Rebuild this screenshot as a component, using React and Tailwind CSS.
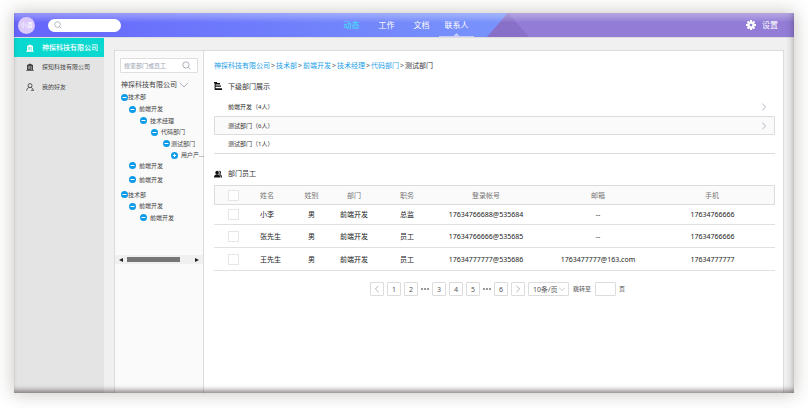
import React from "react";

const TABS = ["动态", "工作", "文档", "联系人"];

const TREE = [
  { label: "技术部", row: "h-3 pl-[6px]", gap: "" },
  { label: "前端开发", row: "h-3 pl-[14px]", gap: "ml-[3px]" },
  { label: "技术经理", row: "h-[11px] pl-[25px]", gap: "ml-[3px]" },
  { label: "代码部门", row: "h-3 pl-[36px]", gap: "ml-[3px]" },
  { label: "测试部门", row: "h-[11px] pl-[48px]", gap: "ml-[1px]" },
  { label: "用户产...", row: "h-3 pl-[56px]", gap: "ml-[3px]", closed: true },
  { label: "前端开发", row: "h-[9px] pl-[14px]", gap: "ml-[3px]" },
  { label: "前端开发", row: "mt-1 h-[11px] pl-[14px]", gap: "ml-[3px]" },
  { label: "技术部", row: "mt-1 h-[11px] pl-[6px]", gap: "" },
  { label: "前端开发", row: "h-3 pl-[14px]", gap: "ml-[3px]" },
  { label: "前端开发", row: "h-[11px] pl-[25px]", gap: "ml-[3px]" },
];

const CRUMBS = ["神探科技有限公司", "技术部", "前端开发", "技术经理", "代码部门"];

const DEPARTMENTS = [
  { name: "前端开发（4人）", arrow: true },
  { name: "测试部门（6人）", arrow: true, active: true },
  { name: "测试部门（1人）" },
];

const STAFF = [
  { h: "h-5", name: "小李", sex: "男", dept: "前端开发", job: "总监", login: "17634766688@535684", mail: "--", phone: "17634766666" },
  { h: "h-[23px]", name: "张先生", sex: "男", dept: "前端开发", job: "员工", login: "17634766666@535685", mail: "--", phone: "17634766666" },
  { h: "h-[23px]", name: "王先生", sex: "男", dept: "前端开发", job: "员工", login: "17634777777@535686", mail: "1763477777@163.com", phone: "17634777777" },
];

function SearchIcon({ className }) {
  return (
    <svg viewBox="0 0 10 10" className={className} fill="none" stroke="currentColor" strokeWidth="0.9" aria-hidden="true">
      <circle cx="4.4" cy="4.4" r="3.5" />
      <path d="M7 7l2.3 2.3" />
    </svg>
  );
}

function Chevron({ className, d }) {
  return (
    <svg viewBox="0 0 10 10" className={className} fill="none" stroke="currentColor" strokeWidth="1" aria-hidden="true">
      <path d={d} />
    </svg>
  );
}

const RIGHT = "M3 1l4 4-4 4";
const LEFT = "M7 1L3 5l4 4";
const DOWN = "M0 2.500l5 5 5-5";

function BuildingIcon() {
  return (
    <svg viewBox="0 0 8 8" className="size-2" fill="currentColor" aria-hidden="true">
      <path fillRule="evenodd" d="M1 2L4 .6l3 1.400v5h.8v.8H.2V7H1zM2.200 3v.5h2.200V3zm0 1.300v.5h2.200v-.5zm0 1.300v.5h2.200v-.5zM5.400 3v4h.4V3z" />
    </svg>
  );
}

function PersonIcon() {
  return (
    <svg viewBox="0 0 8 8" className="size-2" fill="none" stroke="currentColor" strokeWidth="0.9" aria-hidden="true">
      <circle cx="4" cy="2.6" r="2" />
      <path d="M.6 7.600C.8 5.700 2 4.700 3.200 4.500M4.800 4.500C6 4.700 7.200 5.600 7.400 7.600M5 7.300h2.400" />
    </svg>
  );
}

function NodeIcon({ closed }) {
  return (
    <svg viewBox="0 0 7 7" className="size-[7px] shrink-0" aria-hidden="true">
      <circle cx="3.5" cy="3.5" r="3.5" fill="#0c9be8" />
      <path d={closed ? "M1.900 3.500h3.200M3.500 1.900v3.200" : "M1.500 3.500h4"} stroke="#fff" strokeWidth="1" />
    </svg>
  );
}

function Header() {
  return (
    <header className="relative grid h-6 shrink-0 grid-cols-[1fr_auto_1fr] items-center bg-gradient-to-r from-[#6664fb] to-[#7b98fb] to-70% text-[8px] leading-none text-white">
      <svg className="absolute inset-0 h-full w-full" viewBox="0 0 780 24" preserveAspectRatio="none" aria-hidden="true">
        <path d="M494 0H780V24H473z" fill="#927cd6" />
        <path d="M494 0L515 24H473z" fill="#886fc8" />
      </svg>
      <div className="absolute inset-0 bg-gradient-to-b from-white/35 to-transparent to-40%" />
      <div className="relative flex items-center gap-[13px] pl-1">
        <div className="flex size-[17px] items-center justify-center rounded-full bg-[#dac9fa] text-[6px] text-white">小酒</div>
        <label className="flex h-[13px] w-[73px] items-center rounded-full bg-white px-[6px] text-gray-400">
          <SearchIcon className="size-2 shrink-0" />
          <input aria-label="搜索" className="w-full min-w-0 bg-transparent pl-1 text-[7px] text-gray-700 outline-none" />
        </label>
      </div>
      <nav className="relative flex h-full">
        {TABS.map((t, i) => (
          <a key={t} href="#" className={`relative flex h-full w-[35px] items-center justify-center ${i === 0 ? "text-[#3ee6fb]" : ""}`}>
            {t}
            {i === 3 && (
              <svg className="absolute bottom-0 left-0 h-1 w-full" viewBox="0 0 35 4" fill="#c3ccfd" aria-hidden="true">
                <path d="M0 3h14.500L17.500 0l3 3H35v1H0z" />
              </svg>
            )}
          </a>
        ))}
      </nav>
      <button className="relative flex items-center gap-[6px] justify-self-end pr-4">
        <svg viewBox="0 0 20 20" className="size-[10px]" aria-hidden="true">
          <g fill="none" stroke="#fff">
            <circle cx="10" cy="10" r="5" strokeWidth="4.500" />
            <path d="M10 0v4M10 16v4M0 10h4M16 10h4M3 3l3 3M14 14l3 3M17 3l-3 3M6 14l-3 3" strokeWidth="4" />
          </g>
        </svg>
        设置
      </button>
    </header>
  );
}

function Sidebar() {
  const item = "flex items-center gap-2 pl-3";
  return (
    <nav className="flex w-[90px] shrink-0 flex-col bg-[#e4e4e4] text-[6px] leading-none text-[#444]">
      <a href="#" className={`${item} h-[19px] bg-[#09d8d0] text-[7px] font-medium text-white`}><BuildingIcon />神探科技有限公司</a>
      <a href="#" className={`${item} h-5`}><BuildingIcon />探知科技有限公司</a>
      <a href="#" className={`${item} h-5`}><PersonIcon />我的好友</a>
    </nav>
  );
}

function TreePanel() {
  return (
    <aside className="w-[89px] shrink-0 border-r border-[#dcdcdc] bg-[#fafafa] pt-[7px] text-[#444]">
      <label className="mx-[5px] flex h-[15px] items-center rounded-[1px] border border-[#dedede] bg-white pr-[6px] pl-[3px] text-gray-400">
        <input aria-label="搜索部门或员工" placeholder="搜索部门或员工" className="w-full min-w-0 bg-transparent text-[6px] leading-none outline-none placeholder:text-gray-400" />
        <SearchIcon className="size-[9px] shrink-0" />
      </label>
      <button className="mt-[5px] flex h-[13px] items-center gap-[3px] pl-[6px] text-[7px] leading-none">
        神探科技有限公司
        <Chevron d={DOWN} className="size-2 text-gray-400" />
      </button>
      <ul className="text-[6px] leading-none">
        {TREE.map((n, i) => (
          <li key={i} className={`flex items-center ${n.row}`}>
            <NodeIcon closed={n.closed} />
            <span className={`whitespace-nowrap ${n.gap}`}>{n.label}</span>
          </li>
        ))}
      </ul>
      <div className="mt-8 flex h-[9px] items-center gap-1 bg-[#f0f0f0] px-1">
        <svg viewBox="0 0 4 4" className="size-1"><path d="M4 0v4L0 2z" fill="#222" /></svg>
        <div className="h-[5px] w-[53px] bg-[#777]" />
        <svg viewBox="0 0 4 4" className="ml-auto size-1"><path d="M0 0v4l4-2z" fill="#222" /></svg>
      </div>
    </aside>
  );
}

function Check({ label }) {
  return <input type="checkbox" aria-label={label} className="mx-auto block size-[11px] appearance-none border border-[#e6e6e6] bg-white checked:bg-[#0c9be8]" />;
}

function StaffTable() {
  const th = "border-y border-[#dcdcdc] bg-[#fafafa] p-0 font-normal";
  const td = "border-b border-[#e0e0e0] p-0";
  return (
    <table className="mt-[5px] w-full table-fixed border-separate border-spacing-0 text-center text-[7px] leading-none text-[#222]">
      <colgroup>
        <col className="w-[38px]" />
        <col className="w-[39px]" />
        <col className="w-[41px]" />
        <col className="w-[44px]" />
        <col className="w-[62px]" />
        <col className="w-[96px]" />
        <col className="w-[128px]" />
        <col className="w-[113px]" />
      </colgroup>
      <thead>
        <tr className="h-5 text-[#777]">
          <th className={`${th} rounded-l-[1px] border-l`}><Check label="全选" /></th>
          <th className={`${th} pl-2! text-left`}>姓名</th>
          <th className={th}>姓别</th>
          <th className={th}>部门</th>
          <th className={th}>职务</th>
          <th className={th}>登录帐号</th>
          <th className={th}>邮箱</th>
          <th className={`${th} rounded-r-[1px] border-r pr-3!`}>手机</th>
        </tr>
      </thead>
      <tbody>
        {STAFF.map((s) => (
          <tr key={s.login} className={s.h}>
            <td className={td}><Check label={s.name} /></td>
            <td className={`${td} pl-2! text-left`}>{s.name}</td>
            <td className={td}>{s.sex}</td>
            <td className={td}>{s.dept}</td>
            <td className={td}>{s.job}</td>
            <td className={td}>{s.login}</td>
            <td className={td}>{s.mail}</td>
            <td className={`${td} pr-3!`}>{s.phone}</td>
          </tr>
        ))}
      </tbody>
    </table>
  );
}

function Pagination() {
  const box = "flex size-[14px] items-center justify-center rounded-[1px] border border-[#dcdcdc]";
  const dots = <span className="flex w-2 justify-between">{[0, 1, 2].map((i) => <i key={i} className="size-[2px] rounded-full bg-[#777]" />)}</span>;
  return (
    <div className="mt-[11px] flex items-center justify-center gap-[3px] pl-[6px] text-[7px] leading-none text-[#555]">
      <button aria-label="上一页" className={`${box} text-gray-400`}><Chevron d={LEFT} className="size-2" /></button>
      <button className={box}>1</button>
      <button className={box}>2</button>
      {dots}
      <button className={box}>3</button>
      <button className={box}>4</button>
      <button className={box}>5</button>
      {dots}
      <button className={box}>6</button>
      <button aria-label="下一页" className={`${box} text-gray-400`}><Chevron d={RIGHT} className="size-2" /></button>
      <div className="relative">
        <select aria-label="每页条数" className="block h-[14px] w-[41px] appearance-none rounded-[1px] border border-[#dcdcdc] bg-white pl-1 text-[7px] leading-none">
          <option>10条/页</option>
        </select>
        <Chevron d={DOWN} className="pointer-events-none absolute top-1 right-1 size-[6px] text-gray-400" />
      </div>
      <label htmlFor="jump" className="px-px text-[6px]">跳转至</label>
      <input id="jump" className="h-[14px] w-[21px] rounded-[1px] border border-[#dcdcdc] text-center" />
      <span className="text-[6px]">页</span>
    </div>
  );
}

function Main() {
  return (
    <main className="min-w-0 flex-1 bg-white pr-2 pl-[10px] text-[#333]">
      <nav aria-label="面包屑" className="mt-2 flex h-3 items-center gap-px text-[7px] leading-none">
        {CRUMBS.map((c) => (
          <React.Fragment key={c}>
            <a href="#" className="text-[#1ba1e8]">{c}</a>
            <span className="text-[#666]">&gt;</span>
          </React.Fragment>
        ))}
        <span>测试部门</span>
      </nav>
      <h2 className="mt-[9px] flex h-3 items-center gap-[6px] text-[7px] leading-none">
        <svg viewBox="0 0 8 8" className="size-2" fill="#111" aria-hidden="true">
          <path d="M0 0h3v1H6v1.400H1.600v1H7v1.400H1.600v1.400H8V8H.6V1.200H0z" />
        </svg>
        下级部门展示
      </h2>
      <ul className="mt-[6px] border-b border-[#dcdcdc] text-[6px] leading-none">
        {DEPARTMENTS.map((d) => (
          <li key={d.name} className={`flex items-center justify-between pl-[14px] ${d.active ? "h-[19px] rounded-[1px] border border-[#dcdcdc] bg-[#fafafa] pr-[6px] pl-[13px]!" : "h-[18px] pr-[7px]"}`}>
            {d.name}
            {d.arrow && <Chevron d={RIGHT} className="size-2 text-gray-400" />}
          </li>
        ))}
      </ul>
      <h2 className="mt-[13px] flex h-[13px] items-center gap-[6px] text-[7px] leading-none">
        <svg viewBox="0 0 8 8" className="size-2" fill="#111" aria-hidden="true">
          <ellipse cx="3.100" cy="2.700" rx="1.800" ry="2" />
          <path d="M0 7.500c0-1.800.8-2.400 2-2.900h2.200c1.400.5 2.200 1.100 2.200 2.900zM4.800.8c1.800-.4 3 1.600 1.500 3.400 1.100.4 1.700 1.200 1.700 3.300H6.900c0-1.600-.5-2.300-1.700-3.100C5.900 3.200 5.900 1.800 4.800.8z" />
        </svg>
        部门员工
      </h2>
      <StaffTable />
      <Pagination />
    </main>
  );
}

export default function App() {
  return (
    <div className="flex min-h-screen flex-col bg-white px-[14px] pt-[13px] pb-[15px] font-['Noto_Sans','Noto_Sans_CJK_SC',sans-serif]">
      <div className="relative flex flex-1 flex-col bg-[#f0f0f0] shadow-[0_0_16px_1px_rgba(60,55,40,0.28)]">
        <Header />
        <div className="flex flex-1 border-t border-[#dedede]">
          <Sidebar />
          <div className="mt-3 mr-[10px] ml-[10px] flex min-w-0 flex-1 border border-b-0 border-[#dcdcdc]">
            <TreePanel />
            <Main />
          </div>
        </div>
        <div className="pointer-events-none absolute inset-0 shadow-[inset_0_-5px_5px_-2px_rgba(50,40,40,0.5),inset_-6px_0_6px_-3px_rgba(0,0,0,0.14)]" />
      </div>
    </div>
  );
}
